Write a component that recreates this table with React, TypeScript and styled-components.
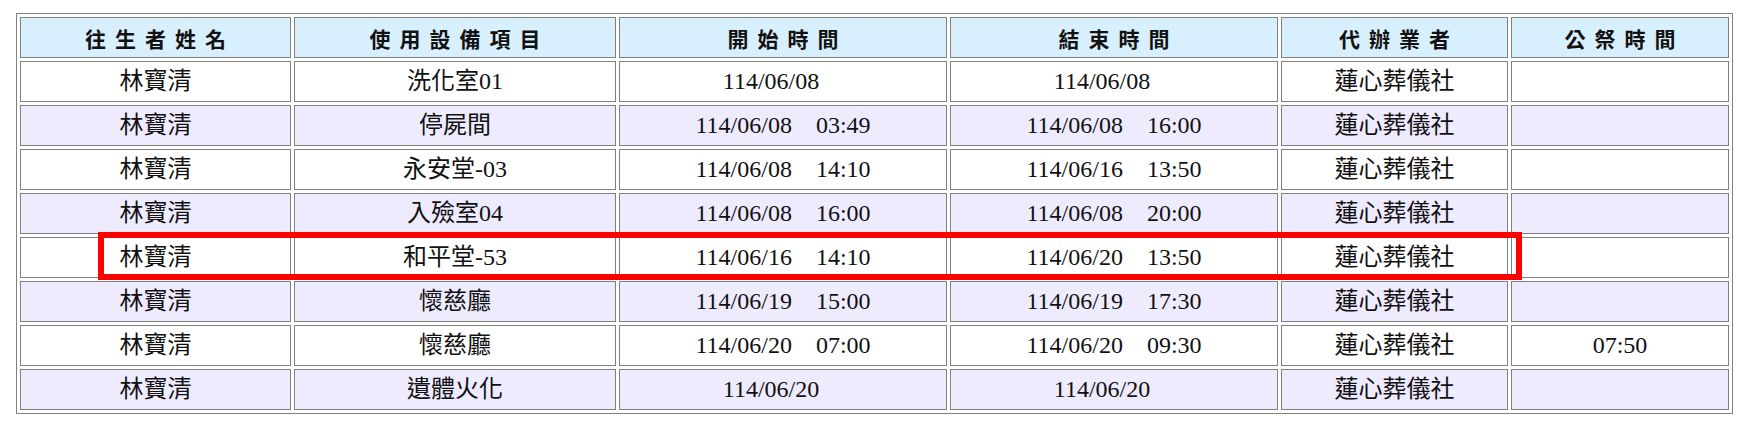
import styled, { createGlobalStyle } from 'styled-components';

const GlobalStyle = createGlobalStyle`
  body {
    margin: 0;
    background: #ffffff;
  }
`;

interface Booking {
  name: string;
  item: string;
  startDate: string;
  startTime: string;
  endDate: string;
  endTime: string;
  agent: string;
  ceremony: string;
}

const headers = ['往生者姓名', '使用設備項目', '開始時間', '結束時間', '代辦業者', '公祭時間'];
const colWidths = [271, 322, 328, 328, 227, 218];

const bookings: Booking[] = [
  { name: '林寶清', item: '洗化室01', startDate: '114/06/08', startTime: '', endDate: '114/06/08', endTime: '', agent: '蓮心葬儀社', ceremony: '' },
  { name: '林寶清', item: '停屍間', startDate: '114/06/08', startTime: '03:49', endDate: '114/06/08', endTime: '16:00', agent: '蓮心葬儀社', ceremony: '' },
  { name: '林寶清', item: '永安堂-03', startDate: '114/06/08', startTime: '14:10', endDate: '114/06/16', endTime: '13:50', agent: '蓮心葬儀社', ceremony: '' },
  { name: '林寶清', item: '入殮室04', startDate: '114/06/08', startTime: '16:00', endDate: '114/06/08', endTime: '20:00', agent: '蓮心葬儀社', ceremony: '' },
  { name: '林寶清', item: '和平堂-53', startDate: '114/06/16', startTime: '14:10', endDate: '114/06/20', endTime: '13:50', agent: '蓮心葬儀社', ceremony: '' },
  { name: '林寶清', item: '懷慈廳', startDate: '114/06/19', startTime: '15:00', endDate: '114/06/19', endTime: '17:30', agent: '蓮心葬儀社', ceremony: '' },
  { name: '林寶清', item: '懷慈廳', startDate: '114/06/20', startTime: '07:00', endDate: '114/06/20', endTime: '09:30', agent: '蓮心葬儀社', ceremony: '07:50' },
  { name: '林寶清', item: '遺體火化', startDate: '114/06/20', startTime: '', endDate: '114/06/20', endTime: '', agent: '蓮心葬儀社', ceremony: '' },
];

const GAP = '\u00a0\u00a0\u00a0\u00a0';

const Page = styled.div`
  padding: 13px 0 0 16px;
`;

const TableWrap = styled.div`
  position: relative;
  width: 1717px;
`;

const Table = styled.table`
  width: 1717px;
  table-layout: fixed;
  border-collapse: separate;
  border-spacing: 3px;
  border: 1px solid #808080;
`;

const HeadCell = styled.th`
  box-sizing: border-box;
  height: 41px;
  padding: 0 0 0 9px;
  border: 1px solid #808080;
  background: #d8effd;
  color: #111111;
  font-family: 'Noto Sans CJK TC', 'Noto Sans', sans-serif;
  font-size: 21px;
  font-weight: 700;
  letter-spacing: 9px;
  text-align: center;
  vertical-align: middle;
`;

const Row = styled.tr<{ $alt: boolean }>`
  background: ${(p) => (p.$alt ? '#eeebff' : '#ffffff')};
`;

const Cell = styled.td`
  box-sizing: border-box;
  height: 41px;
  padding: 0;
  border: 1px solid #808080;
  color: #111111;
  font-family: 'Liberation Serif', 'Noto Sans CJK TC', serif;
  font-size: 24px;
  line-height: 1.2;
  text-align: center;
  vertical-align: middle;
  white-space: nowrap;
`;

const Highlight = styled.div`
  position: absolute;
  left: 82px;
  top: 219px;
  width: 1424px;
  height: 48px;
  box-sizing: border-box;
  border: 6px solid #ff0000;
  pointer-events: none;
`;

export default function App() {
  return (
    <Page>
      <GlobalStyle />
      <TableWrap>
        <Table>
          <colgroup>
            {colWidths.map((w, i) => (
              <col key={i} style={{ width: w }} />
            ))}
          </colgroup>
          <thead>
            <tr>
              {headers.map((h) => (
                <HeadCell key={h}>{h}</HeadCell>
              ))}
            </tr>
          </thead>
          <tbody>
            {bookings.map((b, i) => (
              <Row key={i} $alt={i % 2 === 1}>
                <Cell>{b.name}</Cell>
                <Cell>{b.item}</Cell>
                <Cell>{b.startDate + GAP + b.startTime}</Cell>
                <Cell>{b.endDate + GAP + b.endTime}</Cell>
                <Cell>{b.agent}</Cell>
                <Cell>{b.ceremony}</Cell>
              </Row>
            ))}
          </tbody>
        </Table>
        <Highlight />
      </TableWrap>
    </Page>
  );
}
